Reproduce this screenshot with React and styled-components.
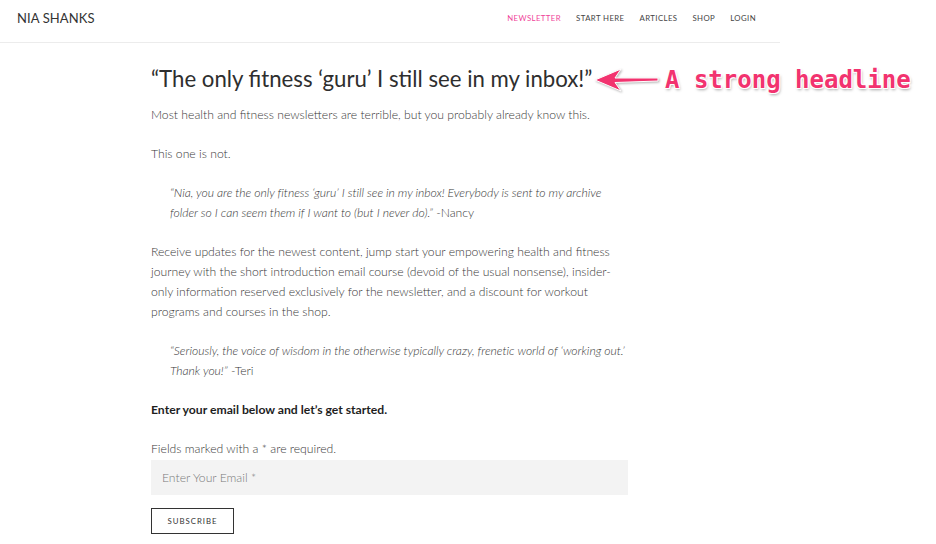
import React from 'react';
import styled, { createGlobalStyle } from 'styled-components';

const GlobalStyle = createGlobalStyle`
  html, body {
    margin: 0;
    padding: 0;
    background: #fff;
  }

  body {
    font-family: 'Lato', 'Liberation Sans', sans-serif;
    color: #383838;
    -webkit-font-smoothing: antialiased;
  }
`;

const Page = styled.div`
  position: relative;
  width: 936px;
  height: 544px;
  overflow: hidden;
`;

const Header = styled.header`
  align-items: center;
  border-bottom: 1px solid #ececec;
  box-sizing: border-box;
  display: flex;
  height: 43px;
  justify-content: space-between;
  padding: 0 24px 6px 17px;
  width: 780px;
`;

const Logo = styled.div`
  color: #333;
  font-size: 13px;
  letter-spacing: 0.1px;
`;

const Nav = styled.nav`
  display: flex;
  gap: 15px;
`;

const NavLink = styled.a`
  color: ${({ $active }) => ($active ? '#f0449a' : '#444')};
  font-size: 7.8px;
  letter-spacing: 0.4px;
  text-decoration: none;
  text-transform: uppercase;
`;

const Main = styled.main`
  padding: 21px 0 0 151px;
  width: 477px;
`;

const Headline = styled.h1`
  color: #2e2e2e;
  font-size: 22.2px;
  font-weight: 400;
  line-height: 30px;
  margin: 0 0 11px;
  white-space: nowrap;
`;

const Paragraph = styled.p`
  font-size: 12.2px;
  font-weight: ${({ $bold }) => ($bold ? 700 : 300)};
  color: ${({ $bold }) => ($bold ? '#1e1e1e' : '#383838')};
  line-height: 20px;
  margin: 0 0 19px;
`;

const Quote = styled.blockquote`
  color: #383838;
  font-size: 12.2px;
  font-weight: 300;
  line-height: 20px;
  margin: 0 -4px 19px 0;
  padding-left: 19px;

  em {
    font-style: italic;
    letter-spacing: -0.05px;
  }
`;

const Note = styled.p`
  font-size: 12.2px;
  font-weight: 300;
  line-height: 20px;
  margin: 0 0 1px;
`;

const EmailInput = styled.input`
  background: #f3f3f3;
  border: none;
  box-sizing: border-box;
  color: #555;
  display: block;
  font-family: inherit;
  font-size: 12.2px;
  font-weight: 300;
  height: 35px;
  outline: none;
  padding: 0 11px;
  width: 477px;

  &::placeholder {
    color: #7a7a7a;
  }
`;

const SubscribeButton = styled.button`
  background: #fff;
  border: 1px solid #333;
  box-sizing: border-box;
  color: #333;
  font-family: inherit;
  font-size: 7.8px;
  height: 26px;
  letter-spacing: 1px;
  margin-top: 13px;
  padding: 0 14px;
  text-transform: uppercase;
  width: 83px;
`;

const Annotation = styled.div`
  align-items: center;
  display: flex;
  gap: 5px;
  left: 594px;
  position: absolute;
  top: 66px;
`;

const AnnotationLabel = styled.span`
  color: #f2336f;
  font-family: 'DejaVu Sans Mono', 'Liberation Mono', monospace;
  font-size: 24px;
  font-weight: 700;
  text-shadow:
    -1px -1px 0 #fff,
    1px -1px 0 #fff,
    -1px 1px 0 #fff,
    1px 1px 0 #fff,
    1px 2px 3px rgba(0, 0, 0, 0.35);
`;

const Arrow = () => (
  <svg
    width="66"
    height="26"
    viewBox="0 0 66 26"
    style={{ filter: 'drop-shadow(1px 1px 1px rgba(0,0,0,0.3))' }}
  >
    <path
      d="M1 13 L27 2 L21 11 L64 11 L64 14 L21 15.5 L27 24 Z"
      fill="#f2336f"
      stroke="#fff"
      strokeWidth="1"
      strokeLinejoin="round"
    />
  </svg>
);

const navItems = ['Newsletter', 'Start Here', 'Articles', 'Shop', 'Login'];

const App = () => (
  <Page>
    <GlobalStyle />

    <Header>
      <Logo>NIA SHANKS</Logo>
      <Nav>
        {navItems.map((item, i) => (
          <NavLink key={item} href="#" $active={i === 0}>
            {item}
          </NavLink>
        ))}
      </Nav>
    </Header>

    <Main>
      <Headline>“The only fitness ‘guru’ I still see in my inbox!”</Headline>

      <Paragraph>
        Most health and fitness newsletters are terrible, but you probably already know this.
      </Paragraph>

      <Paragraph>This one is not.</Paragraph>

      <Quote>
        <em>
          “Nia, you are the only fitness ‘guru’ I still see in my inbox! Everybody is sent to my
          archive folder so I can seem them if I want to (but I never do).”
        </em>{' '}
        -Nancy
      </Quote>

      <Paragraph>
        Receive updates for the newest content, jump start your empowering health and fitness
        journey with the short introduction email course (devoid of the usual nonsense),
        insider-only information reserved exclusively for the newsletter, and a discount for
        workout programs and courses in the shop.
      </Paragraph>

      <Quote>
        <em>
          “Seriously, the voice of wisdom in the otherwise typically crazy, frenetic world of
          ‘working out.’ Thank you!”
        </em>{' '}
        -Teri
      </Quote>

      <Paragraph $bold>Enter your email below and let’s get started.</Paragraph>

      <Note>Fields marked with a * are required.</Note>
      <EmailInput type="email" placeholder="Enter Your Email *" />
      <SubscribeButton type="button">Subscribe</SubscribeButton>
    </Main>

    <Annotation>
      <Arrow />
      <AnnotationLabel>A strong headline</AnnotationLabel>
    </Annotation>
  </Page>
);

export default App;
